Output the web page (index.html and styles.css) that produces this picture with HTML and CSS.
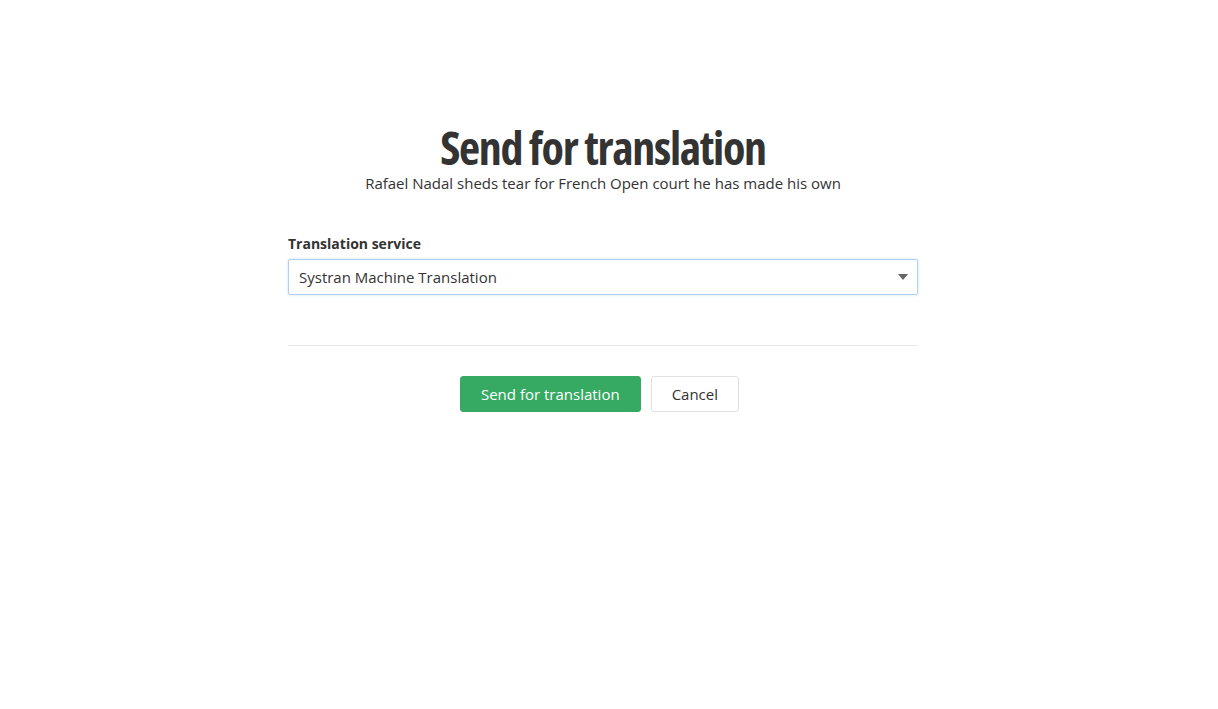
FILE: index.html
```html
<!DOCTYPE html>
<html lang="en">

<head>
    <meta charset="UTF-8">
    <meta name="viewport" content="width=device-width, initial-scale=1.0">
    <title>Send for translation</title>
    <link rel="stylesheet" href="styles.css">
</head>

<body>
    <div class="page">
        <div class="dialog">
            <header class="dialog-header">
                <h1>Send for translation</h1>
                <p class="subtitle">Rafael Nadal sheds tear for French Open court he has made his own</p>
            </header>
            <form class="dialog-form">
                <div class="field">
                    <label for="service">Translation service</label>
                    <div class="select-wrap">
                        <select id="service" name="service">
                            <option>Systran Machine Translation</option>
                        </select>
                        <span class="caret"></span>
                    </div>
                </div>
                <hr>
                <div class="actions">
                    <button type="submit" class="btn btn-primary">Send for translation</button>
                    <button type="button" class="btn btn-default">Cancel</button>
                </div>
            </form>
        </div>
    </div>
</body>

</html>
```

FILE: styles.css
```css
:root {
    --BodyFont: 'Open Sans', 'Noto Sans', sans-serif;
    --TextColor: #333;
    --Green: #36a962;
}

body {
    font-family: var(--BodyFont);
    color: var(--TextColor);
    margin: 0;
    padding: 0;
    background-color: #fff;
}

.page {
    padding: 122px 12px 0 0;
}

.dialog {
    width: 630px;
    margin: 0 auto;
}

.dialog-header {
    text-align: center;
}

.dialog-header h1 {
    font-size: 46px;
    font-weight: 700;
    font-stretch: condensed;
    letter-spacing: -1.3px;
    line-height: 50px;
    margin: 0;
}

.subtitle {
    font-size: 15px;
    line-height: 20px;
    margin: 1px 0 0;
}

.dialog-form {
    margin-top: 41px;
}

.field label {
    display: block;
    font-size: 14px;
    font-weight: 700;
    line-height: 20px;
    margin-bottom: 5px;
}

.select-wrap {
    position: relative;
}

.select-wrap select {
    width: 100%;
    height: 36px;
    padding: 0 30px 0 10px;
    font-family: var(--BodyFont);
    font-size: 15px;
    color: var(--TextColor);
    background-color: #fff;
    border: 1px solid #b3d0f3;
    border-radius: 2px;
    box-shadow: 0 0 3px rgba(120, 170, 230, 0.35);
    appearance: none;
    -webkit-appearance: none;
    outline: none;
}

.caret {
    position: absolute;
    right: 10px;
    top: 15px;
    width: 0;
    height: 0;
    border-left: 5px solid transparent;
    border-right: 5px solid transparent;
    border-top: 6px solid #666;
}

hr {
    border: none;
    border-top: 1px solid #eaeaea;
    margin: 50px 0 30px;
}

.actions {
    display: flex;
    justify-content: center;
    gap: 10px;
    padding-right: 7px;
}

.btn {
    height: 36px;
    padding: 0 20px;
    font-family: var(--BodyFont);
    font-size: 15px;
    border-radius: 3px;
    cursor: pointer;
}

.btn-primary {
    background-color: var(--Green);
    border: 1px solid var(--Green);
    color: #fff;
}

.btn-default {
    background-color: #fff;
    border: 1px solid #e0e0e0;
    color: var(--TextColor);
}
```
